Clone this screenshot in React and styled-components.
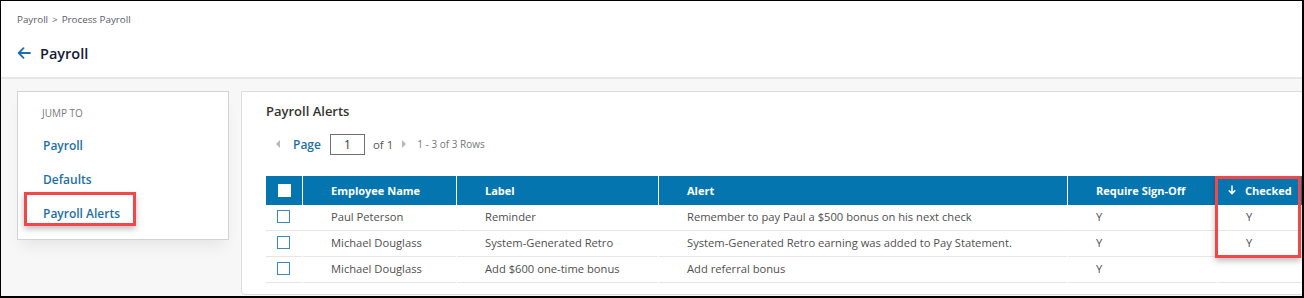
import React from 'react';
import styled, { createGlobalStyle } from 'styled-components';

const GlobalStyle = createGlobalStyle`
  html, body {
    margin: 0;
    padding: 0;
    background: #ffffff;
  }
  body {
    font-family: 'Open Sans', 'Liberation Sans', sans-serif;
  }
  * {
    box-sizing: border-box;
  }
`;

const Frame = styled.div`
  width: 1304px;
  height: 298px;
  border: solid #000;
  border-width: 1px 2px 2px 1px;
  background: #f7f7f7;
  overflow: hidden;
  display: flex;
  flex-direction: column;
`;

const Header = styled.header`
  height: 78px;
  flex: none;
  background: #fff;
  border-bottom: 2px solid #e6e6e6;
  padding: 11px 0 0 16px;
`;

const Breadcrumb = styled.div`
  font-size: 9.8px;
  color: #5a5a6a;
  line-height: 16px;

  span {
    margin: 0 4px;
  }
`;

const TitleRow = styled.div`
  display: flex;
  align-items: center;
  gap: 9px;
  margin-top: 14px;
  height: 22px;
`;

const Title = styled.h1`
  margin: 0;
  font-size: 14.5px;
  font-weight: 600;
  color: #141a33;
`;

const Body = styled.div`
  flex: 1;
  display: flex;
  align-items: flex-start;
  gap: 12px;
  padding: 12px 0 0 16px;
`;

const JumpCard = styled.nav`
  position: relative;
  width: 212px;
  height: 149px;
  flex: none;
  background: #fff;
  border: 1px solid #d3d3d3;
  box-shadow: 0 10px 14px -4px rgba(0, 0, 0, 0.07);
  padding: 13px 0 0 24px;
  display: flex;
  flex-direction: column;
`;

const JumpLabel = styled.div`
  font-size: 10px;
  color: #7a7a7a;
  line-height: 16px;
  margin-bottom: 16px;
`;

const JumpLink = styled.a`
  font-size: 12px;
  font-weight: 600;
  color: #1d6fa8;
  line-height: 18px;
  text-decoration: none;
  margin: 0 0 16px 1px;
`;

const Highlight = styled.div`
  position: absolute;
  border: 3px solid #f04848;
  box-shadow: 0 3px 6px rgba(0, 0, 0, 0.25);
  pointer-events: none;
`;

const Panel = styled.section`
  flex: 1;
  height: 204px;
  margin-right: -4px;
  background: #fff;
  border: 1px solid #dcdcdc;
  border-radius: 0 0 0 4px;
  padding: 9px 0 0 24px;
`;

const PanelTitle = styled.h2`
  margin: 0;
  font-size: 13px;
  font-weight: 600;
  color: #333;
  line-height: 20px;
`;

const Pager = styled.div`
  display: flex;
  align-items: center;
  height: 22px;
  margin-top: 12px;
  padding-left: 10px;
`;

const Tri = styled.span`
  width: 0;
  height: 0;
  border-top: 4px solid transparent;
  border-bottom: 4px solid transparent;
  ${p => (p.dir === 'left'
    ? 'border-right: 4px solid #b8b8b8; margin-right: 13px;'
    : 'border-left: 4px solid #b8b8b8; margin: 0 11px 0 9px;')}
`;

const PageLabel = styled.span`
  font-size: 12px;
  font-weight: 600;
  color: #1d6fa8;
  margin-right: 9px;
`;

const PageInput = styled.div`
  width: 35px;
  height: 21px;
  border: 1px solid #707070;
  font-size: 12px;
  color: #333;
  display: flex;
  align-items: center;
  justify-content: center;
  margin-right: 8px;
`;

const PagerText = styled.span`
  font-size: ${p => (p.small ? '10px' : '11.5px')};
  color: ${p => (p.small ? '#777' : '#555')};
`;

const TableWrap = styled.div`
  position: relative;
  margin-top: 21px;
  margin-left: -1px;
`;

const Table = styled.table`
  width: 100%;
  border-collapse: separate;
  border-spacing: 1px 0;
  table-layout: fixed;
`;

const Th = styled.th`
  background: #0575b0;
  color: #fff;
  font-size: 11px;
  font-weight: 700;
  text-align: left;
  height: 29px;
  padding: 0 0 0 ${p => p.pad || 28}px;
  white-space: nowrap;
`;

const Td = styled.td`
  font-size: 11.2px;
  color: #505050;
  height: 26px;
  padding: 0 0 2px ${p => p.pad || 28}px;
  border-bottom: 1px solid #e6e6e6;
  white-space: nowrap;
`;

const Box = styled.span`
  display: block;
  width: 13px;
  height: 13px;
  border: 1.5px solid ${p => (p.head ? '#fff' : '#3b88bf')};
  background: ${p => (p.head ? '#fff' : 'transparent')};
`;

const SortHead = styled.span`
  display: inline-flex;
  align-items: center;
  gap: 9px;
`;

const rows = [
  { name: 'Paul Peterson', label: 'Reminder', alert: 'Remember to pay Paul a $500 bonus on his next check', sign: 'Y', checked: 'Y' },
  { name: 'Michael Douglass', label: 'System-Generated Retro', alert: 'System-Generated Retro earning was added to Pay Statement.', sign: 'Y', checked: 'Y' },
  { name: 'Michael Douglass', label: 'Add $600 one-time bonus', alert: 'Add referral bonus', sign: 'Y', checked: '' },
];

const BackArrow = () => (
  <svg width="14" height="12" viewBox="0 0 14 12" fill="none">
    <path d="M13 6H2M6.5 1.2L1.7 6l4.8 4.8" stroke="#1d6fa8" strokeWidth="1.8" strokeLinecap="round" strokeLinejoin="round" />
  </svg>
);

const DownArrow = () => (
  <svg width="8" height="10" viewBox="0 0 8 10" fill="none">
    <path d="M4 1v7.5M1.2 5.8L4 8.6l2.8-2.8" stroke="#fff" strokeWidth="1.5" strokeLinecap="round" strokeLinejoin="round" />
  </svg>
);

export default function App() {
  return (
    <>
      <GlobalStyle />
      <Frame>
        <Header>
          <Breadcrumb>Payroll<span>&gt;</span>Process Payroll</Breadcrumb>
          <TitleRow>
            <BackArrow />
            <Title>Payroll</Title>
          </TitleRow>
        </Header>
        <Body>
          <JumpCard>
            <JumpLabel>JUMP TO</JumpLabel>
            <JumpLink href="#payroll">Payroll</JumpLink>
            <JumpLink href="#defaults">Defaults</JumpLink>
            <JumpLink href="#alerts">Payroll Alerts</JumpLink>
            <Highlight style={{ left: 6, top: 100, width: 112, height: 34 }} />
          </JumpCard>
          <Panel>
            <PanelTitle>Payroll Alerts</PanelTitle>
            <Pager>
              <Tri dir="left" />
              <PageLabel>Page</PageLabel>
              <PageInput>1</PageInput>
              <PagerText>of 1</PagerText>
              <Tri dir="right" />
              <PagerText small>1 - 3 of 3 Rows</PagerText>
            </Pager>
            <TableWrap>
              <Table>
                <colgroup>
                  <col style={{ width: 36 }} />
                  <col style={{ width: 153 }} />
                  <col style={{ width: 201 }} />
                  <col style={{ width: 408 }} />
                  <col style={{ width: 149 }} />
                  <col />
                </colgroup>
                <thead>
                  <tr>
                    <Th pad={12}><Box head /></Th>
                    <Th>Employee Name</Th>
                    <Th>Label</Th>
                    <Th>Alert</Th>
                    <Th>Require Sign-Off</Th>
                    <Th pad={10}>
                      <SortHead><DownArrow />Checked</SortHead>
                    </Th>
                  </tr>
                </thead>
                <tbody>
                  {rows.map((r, i) => (
                    <tr key={i}>
                      <Td pad={11}><Box /></Td>
                      <Td>{r.name}</Td>
                      <Td>{r.label}</Td>
                      <Td>{r.alert}</Td>
                      <Td pad={28}>{r.sign}</Td>
                      <Td pad={28}>{r.checked}</Td>
                    </tr>
                  ))}
                </tbody>
              </Table>
              <Highlight style={{ left: 950, top: 0, width: 86, height: 82 }} />
            </TableWrap>
          </Panel>
        </Body>
      </Frame>
    </>
  );
}
